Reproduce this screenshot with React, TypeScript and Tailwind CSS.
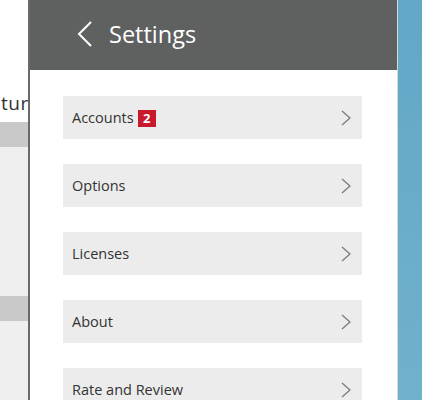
import React from "react";

const items = ["Accounts", "Options", "Licenses", "About", "Rate and Review"];

function Chevron() {
  return (
    <svg width="12" height="16" viewBox="0 0 12 16" fill="none">
      <polyline points="2,1 10,8 2,15" stroke="#7a7a7a" strokeWidth="1.3" />
    </svg>
  );
}

export default function App() {
  return (
    <div
      className="flex w-[422px] h-[400px] overflow-hidden bg-white"
      style={{ fontFamily: '"Open Sans", "Noto Sans", sans-serif' }}
    >
      {/* underlying page */}
      <div className="w-[28px] shrink-0 flex flex-col overflow-hidden">
        <div className="h-[122px] shrink-0 bg-white flex flex-col justify-end pb-[7px] overflow-hidden">
          <div className="ml-[1px] whitespace-nowrap text-[19px] leading-[24px] tracking-[0.5px] text-[#333]">
            ture
          </div>
        </div>
        <div className="h-[25px] shrink-0 bg-[#c9c9c9]" />
        <div className="h-[149px] shrink-0 bg-[#efefef]" />
        <div className="h-[25px] shrink-0 bg-[#c9c9c9]" />
        <div className="flex-1 bg-[#efefef]" />
      </div>

      {/* settings panel */}
      <div className="w-[370px] shrink-0 flex flex-col border-l-2 border-[#6a6a6a] border-r border-r-[#d8d8d8] bg-white">
        <div className="h-[70px] shrink-0 bg-[#5f6161] flex items-center pl-[47px]">
          <svg width="16" height="28" viewBox="0 0 16 28" fill="none" className="mt-[-2px]">
            <polyline points="14,2 2,14 14,26" stroke="#ffffff" strokeWidth="2" />
          </svg>
          <span className="ml-[16px] text-[23.5px] leading-[30px] text-white mt-[-2px]">Settings</span>
        </div>
        <div className="flex flex-col gap-[25px] pt-[26px] pl-[33px]">
          {items.map((label) => (
            <div
              key={label}
              className="w-[299px] h-[43px] shrink-0 bg-[#ececec] flex items-center justify-between pl-[9px] pr-[10px]"
            >
              <div className="flex items-center gap-[4px] text-[14.5px] text-[#333] pt-[1px]">
                <span>{label}</span>
                {label === "Accounts" && (
                  <span className="w-[18px] h-[17px] bg-[#c8192d] text-white text-[13px] font-bold leading-[17px] flex items-center justify-center">
                    2
                  </span>
                )}
              </div>
              <Chevron />
            </div>
          ))}
        </div>
      </div>

      {/* background */}
      <div className="flex-1 bg-gradient-to-b from-[#62a7c7] to-[#70b1cc]" />
    </div>
  );
}
